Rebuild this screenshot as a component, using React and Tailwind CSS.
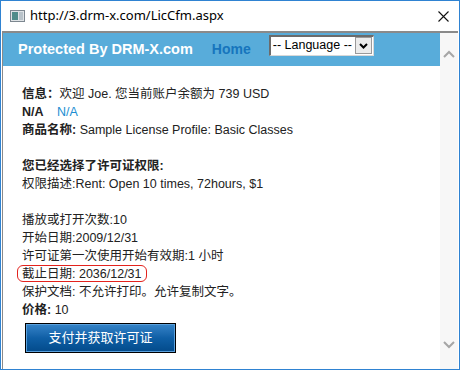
import React from "react";

const font = { fontFamily: '"Liberation Sans", Arial, "Noto Sans CJK SC", sans-serif' };

function WindowIcon() {
  return (
    <svg width="15" height="12" viewBox="0 0 15 12">
      <rect x="0.5" y="0.5" width="14" height="11" fill="#dfe3e6" stroke="#7d8790" />
      <rect x="2" y="2" width="6" height="8" fill="#4f8c8a" />
      <rect x="9" y="2" width="4" height="8" fill="#b9c3ca" />
    </svg>
  );
}

function Chevron({ up }) {
  return (
    <svg width="12" height="8" viewBox="0 0 12 8">
      <path
        d={up ? "M1 7 L6 2 L11 7" : "M1 1 L6 6 L11 1"}
        fill="none"
        stroke="#a6a6a6"
        strokeWidth="2"
      />
    </svg>
  );
}

export default function App() {
  return (
    <div
      className="w-[460px] h-[370px] border border-[#2f83d2] bg-white flex flex-col overflow-hidden text-[#222]"
      style={font}
    >
      {/* TITLE BAR */}
      <div className="h-[30px] flex items-center pl-[9px] pr-[9px] shrink-0">
        <WindowIcon />
        <span
          className="ml-[5px] text-[13px] text-black"
          style={{ fontFamily: '"Noto Sans", "Open Sans", sans-serif' }}
        >
          http://3.drm-x.com/LicCfm.aspx
        </span>
        <svg className="ml-auto mr-[1px]" width="11" height="11" viewBox="0 0 11 11">
          <path d="M0.5 0.5 L10.5 10.5 M10.5 0.5 L0.5 10.5" stroke="#111" strokeWidth="1.1" />
        </svg>
      </div>

      {/* PAGE FRAME */}
      <div className="flex flex-1 ml-px mr-px border-t-2 border-l border-[#8a8a8a] min-h-0">
        <div className="flex-1 flex flex-col">
          {/* HEADER BAND */}
          <div className="h-[33px] bg-[#58acda] flex items-center pl-[15px] shrink-0">
            <span className="text-white font-bold text-[14.5px]">Protected By DRM-X.com</span>
            <span className="ml-[19px] text-[#1675bd] font-bold text-[14px]">Home</span>
            <div className="ml-[18px] -mt-[9px] w-[105px] h-[21px] bg-white flex items-center border-t-2 border-l-2 border-[#6b6b6b] border-r border-b border-r-[#d8d8d8] border-b-[#d8d8d8]">
              <span className="pl-[2px] text-[12.5px] text-black flex-1 leading-none whitespace-nowrap overflow-hidden">
                -- Language --
              </span>
              <div className="w-[17px] h-[17px] mr-[1px] shrink-0 bg-[#ececec] border border-[#9a9a9a] flex items-center justify-center">
                <svg width="9" height="6" viewBox="0 0 9 6">
                  <path d="M1 1 L4.5 4.5 L8 1" fill="none" stroke="#000" strokeWidth="2" />
                </svg>
              </div>
            </div>
          </div>

          {/* CONTENT */}
          <div className="pl-[19px] pt-[19px] text-[12.5px] leading-[18px]">
            <div>
              <b>信息：</b>欢迎 Joe. 您当前账户余额为 739 USD
            </div>
            <div className="flex">
              <b className="w-[35px]">N/A</b>
              <span className="text-[#1b8ed2]">N/A</span>
            </div>
            <div>
              <b>商品名称:</b> Sample License Profile: Basic Classes
            </div>
            <div className="h-[18px]" />
            <div>
              <b>您已经选择了许可证权限:</b>
            </div>
            <div>权限描述:Rent: Open 10 times, 72hours, $1</div>
            <div className="h-[18px]" />
            <div>播放或打开次数:10</div>
            <div>开始日期:2009/12/31</div>
            <div>许可证第一次使用开始有效期:1 小时</div>
            <div className="relative">
              截止日期: 2036/12/31
              <span className="absolute left-[-5px] top-0 w-[130px] h-[17px] border border-[#e3221d] rounded-[6px]" />
            </div>
            <div>保护文档: 不允许打印。允许复制文字。</div>
            <div>
              <b>价格:</b> 10
            </div>
            <button className="mt-[4px] ml-[3px] w-[151px] h-[30px] border border-black bg-gradient-to-b from-[#3584c8] via-[#0f5fa6] to-[#034a8a] text-white text-[13px] shadow-[inset_0_0_0_1px_#5aa0dc]">
              支付并获取许可证
            </button>
          </div>
        </div>

        {/* SCROLLBAR */}
        <div className="w-[18px] bg-[#f7f7f7] flex flex-col items-center justify-between pt-[17px] pb-[20px]">
          <Chevron up />
          <Chevron />
        </div>
      </div>
    </div>
  );
}
